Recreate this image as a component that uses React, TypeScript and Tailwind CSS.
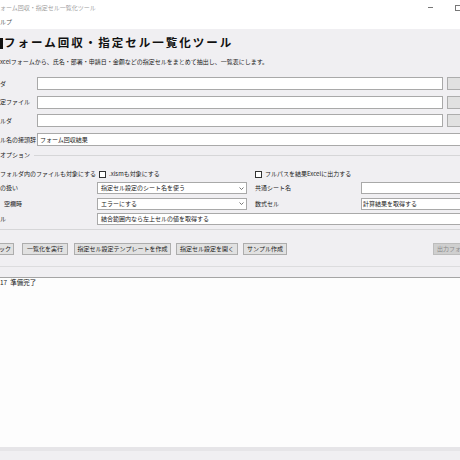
import { ReactNode } from 'react';

// 入力行の定義（左端は画面外で切れている）
const pathRows = [
  { label: 'ダ', value: '', button: true },
  { label: '定ファイル', value: '', button: true },
  { label: 'ルダ', value: '', button: true },
  { label: 'ル名の接頭辞', value: 'フォーム回収結果', button: false },
];

function Check({ label }: { label: string }) {
  return (
    <div className="flex items-center gap-[3px]">
      <span className="w-[7px] h-[7px] border border-[#333] bg-white shrink-0" />
      <span className="whitespace-nowrap">{label}</span>
    </div>
  );
}

function Select({ value }: { value: string }) {
  return (
    <div className="w-[150px] h-full flex items-center justify-between bg-white border border-[#a9a9a9] pl-[3px] pr-[2px]">
      <span className="whitespace-nowrap">{value}</span>
      <svg width="5" height="3" viewBox="0 0 5 3" className="shrink-0">
        <polyline points="0.5,0.5 2.5,2.5 4.5,0.5" fill="none" stroke="#555" strokeWidth="0.8" />
      </svg>
    </div>
  );
}

function Field({ value, className }: { value?: string; className: string }) {
  return (
    <div className={`h-full flex items-center bg-white border border-[#a9a9a9] whitespace-nowrap ${className}`}>
      {value}
    </div>
  );
}

function OptRow({ left, mid, right, input }: { left: ReactNode; mid: ReactNode; right?: ReactNode; input?: ReactNode }) {
  return (
    <div className="flex items-center h-[12px]">
      <div className="w-[97px] shrink-0 whitespace-nowrap">{left}</div>
      <div className="w-[150px] shrink-0 h-full flex items-center">{mid}</div>
      <div className="w-[8px] shrink-0" />
      <div className="w-[106px] shrink-0 whitespace-nowrap">{right}</div>
      {input}
    </div>
  );
}

export default function App() {
  return (
    <div className="w-[460px] h-[460px] overflow-hidden flex flex-col bg-[#f0eff2] text-[#1a1a1a] text-[6px] leading-none font-['Noto_Sans_CJK_JP','Noto_Sans',sans-serif]">
      {/* タイトルバー */}
      <div className="h-[15px] shrink-0 bg-white flex items-center justify-between">
        <span className="text-[#a0a0a0] whitespace-nowrap">ォーム回収・指定セル一覧化ツール</span>
        <div className="flex items-center">
          <span className="w-[5px] h-px bg-[#777] mr-[22px]" />
          <span className="w-[7px] h-[6px] border border-[#777] -mr-[2px]" />
        </div>
      </div>
      {/* メニュー */}
      <div className="h-[14px] shrink-0 bg-white flex items-center text-[#555]">ルプ</div>

      {/* 見出し */}
      <div className="mt-[4px] h-[20px] flex items-center shrink-0">
        <span className="w-[3px] h-[11px] bg-[#111] mr-px" />
        <span className="text-[11.5px] font-bold tracking-[2px] text-[#111] whitespace-nowrap">
          フォーム回収・指定セル一覧化ツール
        </span>
      </div>
      <div className="mt-[3px] h-[12px] flex items-center whitespace-nowrap text-[6px] shrink-0">
        xcelフォームから、氏名・部署・申請日・金額などの指定セルをまとめて抽出し、一覧表にします。
      </div>

      {/* パス入力 */}
      <div className="mt-[9px] flex flex-col gap-[5.7px] shrink-0">
        {pathRows.map((r) => (
          <div key={r.label} className="flex items-center h-[13px]">
            <span className="w-[37px] shrink-0 whitespace-nowrap">{r.label}</span>
            {r.button ? (
              <>
                <Field className="w-[406px] shrink-0" />
                <div className="ml-[4px] w-[16px] shrink-0 h-full bg-[#e1e1e1] border border-[#adadad]" />
              </>
            ) : (
              <Field value={r.value} className="w-[430px] shrink-0 pl-[2px]" />
            )}
          </div>
        ))}
      </div>

      {/* オプション */}
      <div className="mt-[5px] flex flex-col shrink-0">
        <div className="flex items-center h-[8px]">
          <span className="whitespace-nowrap">オプション</span>
          <div className="flex-1 h-px bg-[#d6d6d8] ml-[4px]" />
        </div>
        <div className="mt-[11px] flex items-center h-[8px]">
          <div className="w-[97px] shrink-0 whitespace-nowrap">フォルダ内のファイルも対象にする</div>
          <div className="w-[150px] shrink-0 pl-[2px]">
            <Check label=".xlsmも対象にする" />
          </div>
          <div className="w-[8px] shrink-0" />
          <Check label="フルパスを結果Excelに出力する" />
        </div>
        <div className="mt-[4px] flex flex-col gap-[3.5px]">
          <OptRow
            left="の扱い"
            mid={<Select value="指定セル設定のシート名を使う" />}
            right="共通シート名"
            input={<Field className="w-[110px] shrink-0" />}
          />
          <OptRow
            left={<span className="pl-[4px]">空欄時</span>}
            mid={<Select value="エラーにする" />}
            right="数式セル"
            input={<Field value="計算結果を取得する" className="w-[110px] shrink-0 pl-px" />}
          />
          <div className="flex items-center h-[12px]">
            <div className="w-[97px] shrink-0">ル</div>
            <Field value="結合範囲内なら左上セルの値を取得する" className="w-[380px] shrink-0 pl-[3px]" />
          </div>
        </div>
        <div className="mt-[4px] h-px bg-[#d6d6d8]" />
      </div>

      {/* ボタン */}
      <div className="mt-[13px] h-[12px] flex items-stretch shrink-0 whitespace-nowrap">
        <div className="-ml-px w-[15px] flex items-center justify-end pr-[2px] bg-[#e1e1e1] border border-[#adadad]">ック</div>
        <div className="ml-[8px] w-[46px] flex items-center justify-center bg-[#e1e1e1] border border-[#adadad]">一覧化を実行</div>
        <div className="ml-[6px] w-[97px] flex items-center justify-center bg-[#e1e1e1] border border-[#adadad]">指定セル設定テンプレートを作成</div>
        <div className="ml-[5px] w-[62px] flex items-center justify-center bg-[#e1e1e1] border border-[#adadad]">指定セル設定を開く</div>
        <div className="ml-[5px] w-[44px] flex items-center justify-center bg-[#e1e1e1] border border-[#adadad]">サンプル作成</div>
        <div className="ml-auto w-[27px] flex items-center pl-[3px] overflow-hidden bg-[#cfcfcf] border border-r-0 border-[#bdbdbd] text-[#8a8a8a]">出力フォルダを開く</div>
      </div>
      <div className="mt-[11px] h-px bg-[#dcdcde] shrink-0" />

      {/* ログ */}
      <div className="mt-[10px] h-[170px] shrink-0 bg-[#fdfdfd] border-t border-[#a5a5a5] pt-px text-[6.5px] whitespace-nowrap">
        17&nbsp;&nbsp;準備完了
      </div>
      <div className="flex-1 border-t-[4px] border-[#e6e5e8] bg-[#f0eff2]" />
    </div>
  );
}
